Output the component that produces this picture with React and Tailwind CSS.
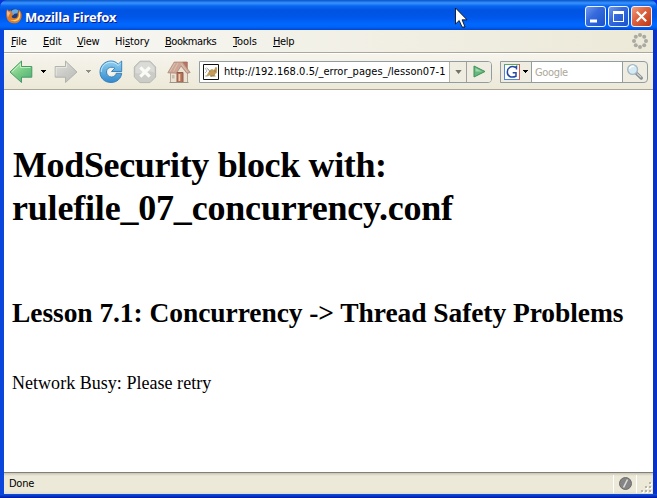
import React from 'react';

const ui = "font-['DejaVu_Sans_Condensed','DejaVu_Sans',sans-serif] [font-stretch:condensed]";

const menus = [
  ['F', 'ile', 'w-[32px]', 'tracking-[-0.2px]'],
  ['E', 'dit', 'w-[34px]', 'tracking-[-0.2px]'],
  ['V', 'iew', 'w-[38px]', 'tracking-[-0.25px]'],
  ['Hi', 'story', 'w-[50px]', 'tracking-[-0.1px]'],
  ['B', 'ookmarks', 'w-[68px]', 'tracking-[-0.45px]'],
  ['T', 'ools', 'w-[40px]', 'tracking-[-0.1px]'],
  ['H', 'elp', 'w-[40px]', 'tracking-[-0.35px]'],
];

function FirefoxLogo() {
  return (
    <svg width="16" height="16" viewBox="0 0 16 16" className="shrink-0">
      <circle cx="8.5" cy="7.2" r="6.5" fill="#1c3d80" />
      <path d="M5 4C6 1 10 .4 12.5 2.6l-1 2.6-3 .5-2 2Z" fill="#69abe0" />
      <path d="M1 1.2 3 3 5 2.3 5 4.5 8 6 6 7.5C5 9 7 10.8 9 10.2 11.5 10 12.2 7.5 11.5 5.5 12.5 5 13 3.5 12.6 1.6 15 3.4 16 6 15.5 9 14.5 13.5 11.5 15.7 7.5 15.3 3 15 .5 11.5.4 7.5.2 5 .5 3 1 1.2Z" fill="#dd7b2b" />
      <path d="M12.8 3C15 5.5 14.5 9.8 12.5 11.8 10 14 6 13.5 4 11.8 7 12.7 11 12 12.5 9 13.4 7 13.2 4.8 12.8 3Z" fill="#ffd66a" />
      <path d="M1.2 2.5 3 4.3 4.5 4.8 2.8 7.5 2 9.5C.8 7 .8 4.5 1.2 2.5Z" fill="#f7b881" />
    </svg>
  );
}

function Caret({ color }) {
  return (
    <svg width="5" height="3" viewBox="0 0 5 3" className="shrink-0" shapeRendering="crispEdges">
      <path d="M0 0H5V1H4V2H3V3H2V2H1V1H0Z" fill={color} />
    </svg>
  );
}

function Arrow({ back }) {
  const id = back ? 'back' : 'fwd';
  return (
    <svg width="24" height="24" viewBox="0 0 24 24" className="shrink-0">
      <defs>
        <linearGradient id={id} x1="0" y1="0" x2="0.7" y2="1">
          <stop offset="0" stopColor={back ? '#c6f0b8' : '#e2e2de'} />
          <stop offset="0.6" stopColor={back ? '#75ca83' : '#cacac7'} />
          <stop offset="1" stopColor={back ? '#56b17a' : '#bdbdb9'} />
        </linearGradient>
      </defs>
      <path
        d={back ? 'M1 12 12.5 1V6.5H22.8V17.2H12.5V22.5Z' : 'M23 12 11.5 1V6.5H1.2V17.2H11.5V22.5Z'}
        fill={`url(#${id})`}
        stroke={back ? '#469b66' : '#b3b3ae'}
        strokeLinejoin="round"
      />
      <path
        d={back ? 'M3.2 11.7 11.5 3.7V7.5H21.5' : 'M12.5 3.7V7.5H2.2V15.5'}
        fill="none" stroke={back ? '#d5f6c9' : '#ececE7'} opacity=".8"
      />
    </svg>
  );
}

function Reload() {
  return (
    <svg width="24" height="24" viewBox="0 0 24 24" className="shrink-0">
      <defs>
        <linearGradient id="reload" x1="0" y1="0" x2="0" y2="1">
          <stop offset="0" stopColor="#91d0ef" />
          <stop offset="1" stopColor="#3289ce" />
        </linearGradient>
      </defs>
      <path d="M22.7 1V11.5H12.5L15.8 8.2C12.5 6 7.5 7.7 7.5 12 7.5 15 9.8 17 12.5 17 15.2 17 16.8 15.3 17.2 13.3H22.7C22 18.5 18 22.5 12 22.5 5.5 22.5 1 18 1 12 1 5.5 6 1 12 1 15 1 17 2 19.2 4.2Z" fill="url(#reload)" stroke="#327bb8" strokeWidth=".9" />
      <path d="M2.2 12C2.2 6 7 2.2 12 2.2 15 2.2 17 3.5 19 5.5L21.7 3" fill="none" stroke="#c7ecfa" strokeWidth=".9" />
      <path d="M9.3 11.5C10.2 9.8 11.5 9.3 13 9.5L11.2 12.8H15C14 15.3 10 15.6 9.3 13Z" fill="#f4f7f5" />
    </svg>
  );
}

function Stop() {
  return (
    <svg width="24" height="24" viewBox="0 0 24 24" className="shrink-0">
      <path d="M7 1.2H17L22.6 7V17L17 22.6H7L1.3 17V7Z" fill="#cbcbc8" stroke="#b7b7b2" />
      <path d="M7.4 2.3H16.6L21.5 7.4V13C15 9 9 15 2.4 13V7.4Z" fill="#dadad7" />
      <path d="m7.3 7.3 9.4 9.4m0-9.4-9.4 9.4" stroke="#fafaf7" strokeWidth="3.2" />
    </svg>
  );
}

function Home() {
  return (
    <svg width="24" height="24" viewBox="0 0 24 24" className="shrink-0">
      <path d="M15.5 2H20.3V10H15.5Z" fill="#b87464" stroke="#9d6959" strokeWidth=".7" />
      <path d="M3.5 11 8 5 14 5 20.5 11V22.5H3.5Z" fill="#ebe2d2" stroke="#b5a698" />
      <path d="M.8 12.8 7.2 2H15.5L23.2 12.5 20 13.4 14 6 9.5 13.2Z" fill="#cda695" stroke="#a98373" strokeWidth=".7" />
      <path d="M8 3 3 11.5M11 3 6.5 11.5M14 3.5 20.5 12" stroke="#e4cbbd" strokeWidth=".7" />
      <path d="M10 12.5H16V22.5H10Z" fill="#b67057" stroke="#8f5e50" />
      <path d="M11.5 14H13.3V21H11.5Z" fill="#e8ccb0" />
      <path d="M5 15H7.5V18.5H5Z" fill="#c5beb0" />
      <path d="M2.5 22.5H21.5" stroke="#9d9389" />
    </svg>
  );
}

function SiteIcon() {
  return (
    <svg width="16" height="16" viewBox="0 0 16 16" className="shrink-0">
      <path d="M.5.5H15.5V15.5H.5Z" fill="#fff" stroke="#111" />
      <path d="M2 4 4 7 2 9M2 12H5L8 10" fill="none" stroke="#b7b7b7" />
      <path d="M7 6 9 5 11 6 12.5 3 14 3.5 13.8 9 12 10 12.5 13 10 12 8 13 7 11 3 12.5 5 9Z" fill="#c39c59" />
      <path d="M3.5 4 6 6 7 8M11 7H13M7 12H11" fill="none" stroke="#746b58" strokeWidth=".7" />
    </svg>
  );
}

function GoogleIcon() {
  return (
    <svg width="16" height="16" viewBox="0 0 16 16" className="shrink-0">
      <path d="M0 0H16V16H0Z" fill="#fff" />
      <path d="M.5 15.5V.5" fill="none" stroke="#5086d6" />
      <path d="M0 .5H15.5" stroke="#5bab59" />
      <path d="M15.5 0V16" stroke="#da5648" />
      <path d="M0 15.5H15" stroke="#5086d6" />
      <path d="M12.5 5.5V2.5L11.3 3.3C7 1.3 3.3 4 3.3 8 3.3 12.3 7 14.3 12 12.3V8.7H8.7" fill="none" stroke="#2547a2" strokeWidth="1.5" />
    </svg>
  );
}

function Search() {
  return (
    <svg width="18" height="18" viewBox="0 0 18 18" className="shrink-0">
      <path d="m10.3 10.3 5 4.7" stroke="#888f92" strokeWidth="3.3" strokeLinecap="round" />
      <path d="m11 10.6 4.2 3.8" stroke="#d6d9da" strokeWidth="1.2" />
      <circle cx="6.6" cy="6.5" r="4.9" fill="#d4eaf4" stroke="#a7b8c2" strokeWidth="1.4" />
      <path d="M3.5 6C4 3.5 6 2.8 8 3.5" fill="none" stroke="#fff" strokeWidth="1.5" />
    </svg>
  );
}

function WindowButton({ kind }) {
  return (
    <svg width="21" height="21" viewBox="0 0 21 21" className="shrink-0">
      <defs>
        <linearGradient id={`btn-${kind}`} x1="0" y1="0" x2="1" y2="1">
          <stop offset="0" stopColor={kind === 'close' ? '#efa181' : '#779bed'} />
          <stop offset=".4" stopColor={kind === 'close' ? '#df6643' : '#376bdd'} />
          <stop offset="1" stopColor={kind === 'close' ? '#bd3410' : '#1751cd'} />
        </linearGradient>
      </defs>
      <rect x=".5" y=".5" width="20" height="20" rx="2.5" fill={`url(#btn-${kind})`} stroke="#edf3ff" />
      {kind === 'min' && <path d="M5 13.5H12V16.5H5Z" fill="#fff" />}
      {kind === 'max' && <path d="M5 5H16V16H5ZM6 8V15H15V8Z" fill="#fff" fillRule="evenodd" />}
      {kind === 'close' && <path d="m5.8 5.8 9.4 9.4m0-9.4-9.4 9.4" stroke="#fff" strokeWidth="2.2" />}
    </svg>
  );
}

function Throbber() {
  const dots = [[8, 2], [12.2, 3.8], [14, 8], [12.2, 12.2], [8, 14], [3.8, 12.2], [2, 8], [3.8, 3.8]];
  return (
    <svg width="16" height="16" viewBox="0 0 16 16">
      {dots.map(([x, y]) => <circle key={`${x}-${y}`} cx={x} cy={y} r="2" fill="#aaa9a2" />)}
    </svg>
  );
}

export default function App() {
  return (
    <div className={`relative flex h-[498px] w-[657px] flex-col overflow-hidden bg-[#0831d9] text-black ${ui}`}>
      <div className="flex h-[30px] shrink-0 items-center rounded-t-[7px] bg-[linear-gradient(180deg,#0753c5_0px,#3993ff_3px,#0867ee_6px,#0054e3_10px,#0056e8_17px,#0067ff_24px,#0064f8_27px,#0046d0_30px)] pl-[6px] pr-[5px] pt-[3px]">
        <div className="mb-[2px]"><FirefoxLogo /></div>
        <span className="ml-[3px] whitespace-nowrap font-['Open_Sans',sans-serif] text-[13px] font-bold leading-4 tracking-[-0.25px] text-white [font-stretch:normal] [text-shadow:1px_1px_0_#0a1883]">Mozilla Firefox</span>
        <div className="ml-auto flex gap-[2px]">
          <WindowButton kind="min" /><WindowButton kind="max" /><WindowButton kind="close" />
        </div>
      </div>

      <div className="flex h-[464px] flex-col border-x-4 border-l-[#0b46dc] border-r-[#0831c8] bg-[#ece9d8]">
        <div className="flex h-[23px] shrink-0 items-center border-b border-[#aca899] bg-gradient-to-r from-[#f8f8f6] to-[#ece9d8] pl-[7px] pr-[5px] text-[11px] leading-[14px]">
          <div className="flex pt-[2px]">
            {menus.map(([head, tail, width, tracking]) => (
              <span key={tail} className={`${width} ${tracking} shrink-0 whitespace-nowrap`}>
                {head === 'Hi' ? <>Hi<span className="underline underline-offset-1">s</span>tory</> : <><span className="underline underline-offset-1">{head}</span>{tail}</>}
              </span>
            ))}
          </div>
          <div className="ml-auto"><Throbber /></div>
        </div>

        <div className="flex h-[37px] shrink-0 items-center border-b border-t border-b-[#aca899] border-t-white bg-[linear-gradient(180deg,#f6f4ec,#ece9d8)] pl-[5px] pr-[5px]">
          <Arrow back />
          <div className="ml-2 mr-[8px] flex"><Caret color="#000" /></div>
          <Arrow />
          <div className="ml-[8px] mr-[8px] flex"><Caret color="#8f8e87" /></div>
          <Reload />
          <div className="ml-[10px] flex"><Stop /></div>
          <div className="ml-[10px] flex"><Home /></div>
          <div className="ml-2 flex h-[22px] w-[293px] shrink-0 items-center overflow-hidden rounded-r border border-[#929da1] bg-white pl-[3px]">
            <SiteIcon />
            <span className="ml-[5px] w-[225px] shrink-0 overflow-hidden whitespace-nowrap pt-px text-[11px] leading-4 tracking-[0.05px]">http://192.168.0.5/_error_pages_/lesson07-1</span>
            <div className="flex h-full w-[17px] shrink-0 items-center justify-center border-l border-[#b5b5aa] bg-[#efede2]">
              <svg width="7" height="4" viewBox="0 0 8 5"><path d="M0 0H8L4 5Z" fill="#737269" /></svg>
            </div>
            <div className="flex h-full w-[25px] shrink-0 items-center justify-center border-l border-[#9fa19b] bg-[#efede2]">
              <svg width="13" height="13" viewBox="0 0 13 13"><path d="M1 1 12 6.5 1 12Z" fill="#64b77d" stroke="#3e9155" strokeLinejoin="round" /><path d="M2.5 3 9 6.5H2.5Z" fill="#a1d7a9" /></svg>
            </div>
          </div>
          <div className="ml-2 flex h-[22px] w-[148px] shrink-0 items-center overflow-hidden rounded-r border border-[#929da1] bg-[#efede2] pl-[3px]">
            <GoogleIcon />
            <div className="ml-[3px] mr-[3px] flex"><Caret color="#000" /></div>
            <div className="flex h-full w-[92px] items-center border-x border-[#929da1] bg-white pl-[3px] pt-[3px] text-[11px] leading-[14px] tracking-[-0.35px] text-[#aca899]">Google</div>
            <div className="ml-[3px] flex"><Search /></div>
          </div>
        </div>

        <main className="h-[382px] shrink-0 bg-white pl-2 font-['Liberation_Serif',serif] [font-stretch:normal]">
          <h1 className="pt-[54px] text-[36px] font-bold leading-[43px]">
            <span className="block whitespace-nowrap pl-px tracking-[-0.36px]">ModSecurity block with:</span>
            <span className="block whitespace-nowrap tracking-[-0.19px]">rulefile_07_concurrency.conf</span>
          </h1>
          <h2 className="mt-[67px] h-8 whitespace-nowrap text-[27.5px] font-bold leading-8 tracking-[-0.07px]">Lesson 7.1: Concurrency -&gt; Thread Safety Problems</h2>
          <p className="mt-[43px] whitespace-nowrap text-[18px] leading-[22px] tracking-[0.03px]">Network Busy: Please retry</p>
        </main>

        <div className="flex h-[22px] shrink-0 items-center border-t border-[#808078] bg-[linear-gradient(180deg,#c8c5b5_0px,#ece9d8_3px,#ece9d8_18px,#dfddd0)] pl-[5px] text-[11px] tracking-[-0.25px]">
          <span className="leading-[14px]">Done</span>
          <div className="ml-auto flex h-[18px] w-[24px] items-center justify-center border-x border-white">
            <svg width="13" height="13" viewBox="0 0 13 13"><circle cx="6.5" cy="6.5" r="6" fill="#858585" stroke="#6c6c6c" /><path d="M4.5 10.5 8.5 2.5" stroke="#deded9" strokeWidth="1.5" /></svg>
          </div>
          <svg width="16" height="20" viewBox="0 0 16 20" shapeRendering="crispEdges">
            {[[12, 8], [8, 12], [12, 12], [4, 16], [8, 16], [12, 16]].map(([x, y]) => (
              <g key={`${x}-${y}`}><path d={`M${x + 1} ${y + 1}h2v2h-2z`} fill="#fff" /><path d={`M${x} ${y}h2v2h-2z`} fill="#b8b4a2" /></g>
            ))}
          </svg>
        </div>
      </div>
      <div className="h-1 shrink-0 bg-[linear-gradient(180deg,#0c52dd,#0635ca_50%,#00159a)]" />

      <svg className="absolute left-[455px] top-[7px]" width="13" height="21" viewBox="0 0 13 21">
        <path d="M.5 1V17L4.2 13.5 7.1 20H10L7.1 12.8H12Z" fill="#fff" stroke="#000" strokeWidth=".8" />
      </svg>
    </div>
  );
}
